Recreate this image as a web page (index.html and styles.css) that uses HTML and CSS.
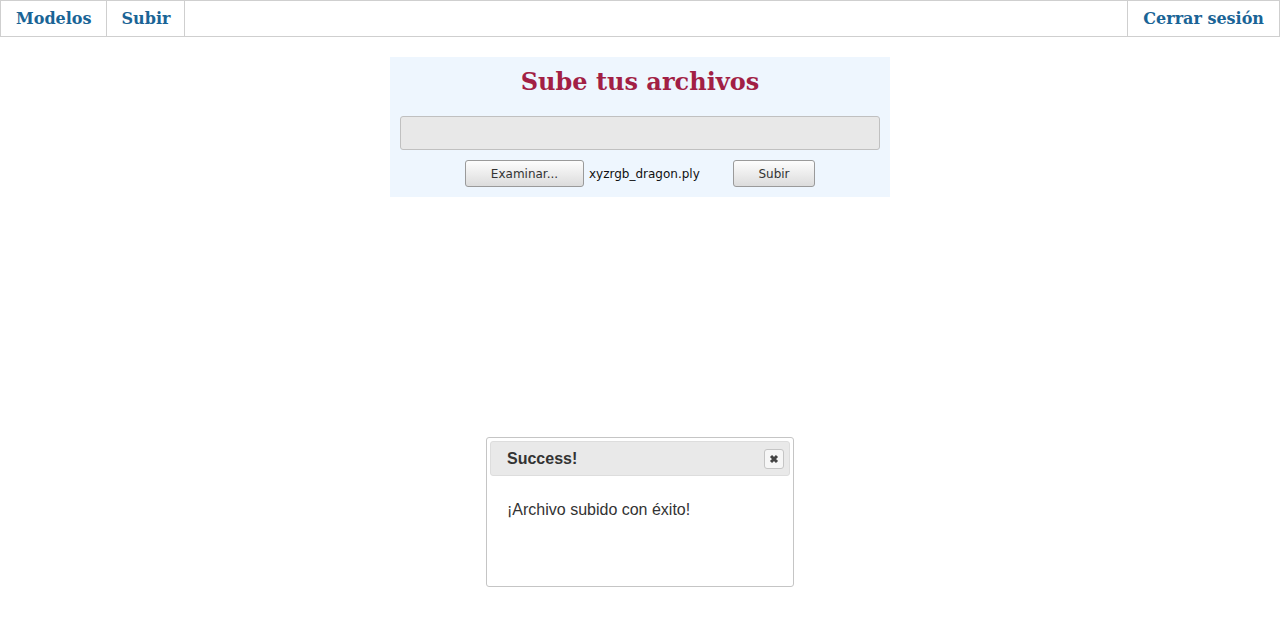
FILE: index.html
```html
<!DOCTYPE html>
<html lang="es">
<head>
<meta charset="utf-8">
<title>Subir</title>
<link rel="stylesheet" href="styles.css">
</head>
<body>
<nav class="topnav">
  <a class="nav-item" href="#">Modelos</a>
  <a class="nav-item" href="#">Subir</a>
  <span class="nav-spacer"></span>
  <a class="nav-item nav-last" href="#">Cerrar sesión</a>
</nav>
<main class="page">
  <section class="upload">
    <h1 class="upload-title">Sube tus archivos</h1>
    <div class="dropzone"></div>
    <div class="controls">
      <button class="btn btn-browse" type="button">Examinar...</button>
      <span class="filename">xyzrgb_dragon.ply</span>
      <button class="btn btn-submit" type="button">Subir</button>
    </div>
  </section>
</main>
<div class="dialog">
  <div class="dialog-head">
    <span class="dialog-title">Success!</span>
    <button class="dialog-close" type="button" aria-label="Cerrar">
      <svg width="10" height="10" viewBox="0 0 10 10"><path d="M2 2 L8 8 M8 2 L2 8" stroke="#444" stroke-width="3" stroke-linecap="butt"/></svg>
    </button>
  </div>
  <div class="dialog-body">¡Archivo subido con éxito!</div>
</div>
</body>
</html>
```

FILE: styles.css
```css
html, body {
  margin: 0;
  padding: 0;
  background: #fff;
}
body {
  font-family: "DejaVu Sans", sans-serif;
  height: 624px;
  position: relative;
}
.topnav {
  display: flex;
  height: 35px;
  border: 1px solid #cfcfcf;
  box-sizing: content-box;
}
.nav-item {
  display: flex;
  align-items: center;
  padding: 0 14px 0 15px;
  font-family: "DejaVu Serif", serif;
  font-weight: bold;
  font-size: 16px;
  color: #1a6496;
  text-decoration: none;
  border-right: 1px solid #cfcfcf;
}
.nav-spacer {
  flex: 1;
  border-right: 1px solid #cfcfcf;
}
.nav-last {
  border-right: none;
  padding: 0 15px;
}
.page {
  display: flex;
  justify-content: center;
  padding-top: 20px;
}
.upload {
  width: 500px;
  height: 140px;
  box-sizing: border-box;
  background: #eef6fe;
  padding: 0 10px;
  display: flex;
  flex-direction: column;
  align-items: center;
}
.upload-title {
  margin: 8px 0 0;
  height: 34px;
  line-height: 34px;
  font-family: "DejaVu Serif", serif;
  font-weight: bold;
  font-size: 24px;
  color: #a21f45;
}
.dropzone {
  margin-top: 17px;
  width: 480px;
  height: 34px;
  box-sizing: border-box;
  background: #e8e8e8;
  border: 1px solid #c0c0c0;
  border-radius: 3px;
}
.controls {
  display: flex;
  align-items: center;
  margin-top: 10px;
}
.btn {
  height: 27px;
  box-sizing: border-box;
  border: 1px solid #9a9a9a;
  border-radius: 3px;
  background: linear-gradient(#fdfdfd, #dcdcdc);
  font-family: "DejaVu Sans", sans-serif;
  font-size: 12px;
  color: #333;
  padding: 0;
}
.btn-browse {
  width: 119px;
}
.filename {
  margin-left: 5px;
  width: 144px;
  font-size: 12px;
  color: #111;
}
.btn-submit {
  width: 82px;
}
.dialog {
  position: absolute;
  left: 486px;
  top: 437px;
  width: 308px;
  height: 150px;
  box-sizing: border-box;
  border: 1px solid #c5c5c5;
  border-radius: 3px;
  padding: 3px;
  background: #fff;
  font-family: "Liberation Sans", Arial, sans-serif;
}
.dialog-head {
  display: flex;
  align-items: center;
  justify-content: space-between;
  height: 35px;
  box-sizing: border-box;
  background: #e9e9e9;
  border: 1px solid #dddddd;
  border-radius: 3px;
  padding: 0 5px 0 16px;
}
.dialog-title {
  font-weight: bold;
  font-size: 16px;
  color: #333;
}
.dialog-close {
  width: 20px;
  height: 20px;
  box-sizing: border-box;
  padding: 0;
  border: 1px solid #c5c5c5;
  border-radius: 3px;
  background: #f6f6f6;
  display: flex;
  align-items: center;
  justify-content: center;
}
.dialog-body {
  padding: 25px 17px;
  font-size: 16px;
  color: #333;
}
```
